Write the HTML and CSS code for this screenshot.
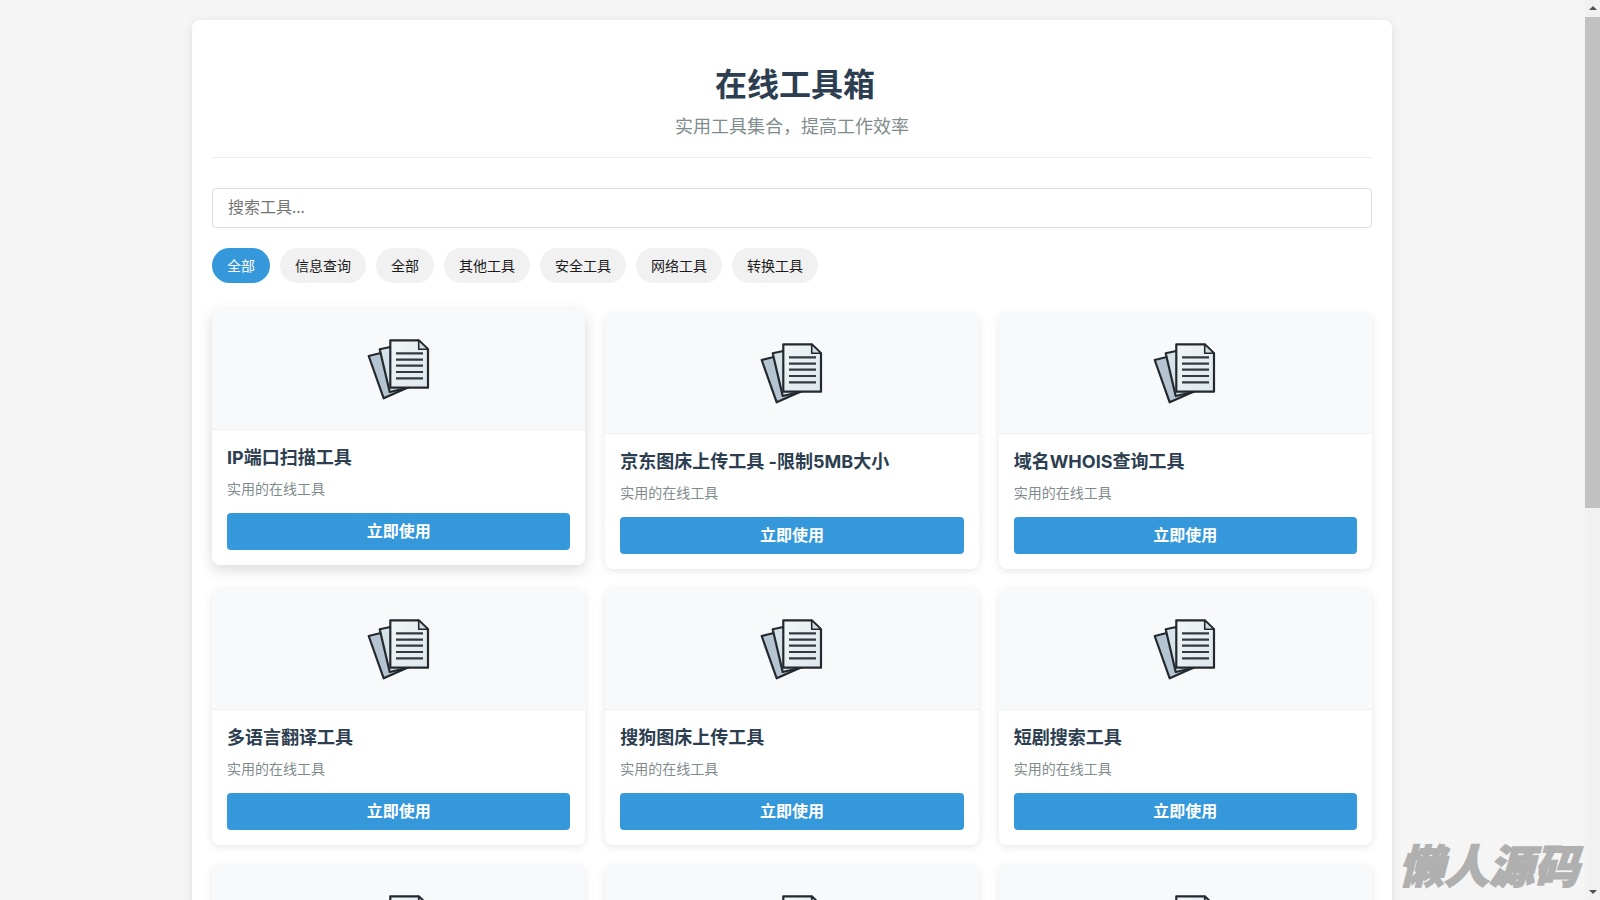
FILE: index.html
```html
<!DOCTYPE html>
<html lang="zh-CN">
<head>
<meta charset="utf-8">
<title>在线工具箱</title>
<link rel="stylesheet" href="styles.css">
</head>
<body>
<svg class="defs" width="0" height="0" aria-hidden="true">
  <defs>
    <linearGradient id="sheet" x1="0" y1="0" x2="1" y2="1">
      <stop offset="0" stop-color="#f2f6f7"/>
      <stop offset="1" stop-color="#dde7eb"/>
    </linearGradient>
  </defs>
  <symbol id="doc" viewBox="0 0 64 64">
    <path d="M1.7 19 12.7 16.3 24 12 42 50 16.7 61.3Z" fill="#b4c4d0" stroke="#23292e" stroke-width="2.2" stroke-linejoin="round"/>
    <path d="M12.7 12.3 23.3 10 41 50.7 22.7 55Z" fill="#d5e2e8" stroke="#23292e" stroke-width="2.2" stroke-linejoin="round"/>
    <path d="M23.3 3.3H51.7L61 12.3V50.7H23.3Z" fill="url(#sheet)" stroke="#23292e" stroke-width="2.2" stroke-linejoin="round"/>
    <path d="M51.7 3.3V12.3H61Z" fill="#cfdde3" stroke="#23292e" stroke-width="1.6" stroke-linejoin="round"/>
    <path d="M29 16.3H56M29 22.7H56M29 28.7H56M29 35H56M29 41.3H56" stroke="#343b40" stroke-width="2.2" fill="none"/>
  </symbol>
</svg>
<div class="viewport">
  <div class="page">
    <main class="container">
      <header class="header">
        <h1 class="title">在线工具箱</h1>
        <p class="subtitle">实用工具集合，提高工作效率</p>
      </header>
      <input class="search" type="text" placeholder="搜索工具...">
      <nav class="filters">
        <span class="pill pill-active">全部</span>
        <span class="pill">信息查询</span>
        <span class="pill">全部</span>
        <span class="pill">其他工具</span>
        <span class="pill">安全工具</span>
        <span class="pill">网络工具</span>
        <span class="pill">转换工具</span>
      </nav>
      <section class="grid">
        <article class="card card-hover">
          <div class="thumb"><svg class="icon"><use href="#doc"/></svg></div>
          <div class="body"><h3 class="name">IP端口扫描工具</h3><p class="desc">实用的在线工具</p><a class="btn">立即使用</a></div>
        </article>
        <article class="card">
          <div class="thumb"><svg class="icon"><use href="#doc"/></svg></div>
          <div class="body"><h3 class="name">京东图床上传工具 -限制5MB大小</h3><p class="desc">实用的在线工具</p><a class="btn">立即使用</a></div>
        </article>
        <article class="card">
          <div class="thumb"><svg class="icon"><use href="#doc"/></svg></div>
          <div class="body"><h3 class="name">域名WHOIS查询工具</h3><p class="desc">实用的在线工具</p><a class="btn">立即使用</a></div>
        </article>
        <article class="card">
          <div class="thumb"><svg class="icon"><use href="#doc"/></svg></div>
          <div class="body"><h3 class="name">多语言翻译工具</h3><p class="desc">实用的在线工具</p><a class="btn">立即使用</a></div>
        </article>
        <article class="card">
          <div class="thumb"><svg class="icon"><use href="#doc"/></svg></div>
          <div class="body"><h3 class="name">搜狗图床上传工具</h3><p class="desc">实用的在线工具</p><a class="btn">立即使用</a></div>
        </article>
        <article class="card">
          <div class="thumb"><svg class="icon"><use href="#doc"/></svg></div>
          <div class="body"><h3 class="name">短剧搜索工具</h3><p class="desc">实用的在线工具</p><a class="btn">立即使用</a></div>
        </article>
        <article class="card">
          <div class="thumb"><svg class="icon"><use href="#doc"/></svg></div>
        </article>
        <article class="card">
          <div class="thumb"><svg class="icon"><use href="#doc"/></svg></div>
        </article>
        <article class="card">
          <div class="thumb"><svg class="icon"><use href="#doc"/></svg></div>
        </article>
      </section>
    </main>
    <div class="watermark">懒人源码</div>
  </div>
  <aside class="scrollbar">
    <span class="arrow arrow-up"></span>
    <span class="track"><span class="thumb-bar"></span></span>
    <span class="arrow arrow-down"></span>
  </aside>
</div>
</body>
</html>
```
FILE: styles.css
```css
* { box-sizing: border-box; }
html, body { margin: 0; height: 100%; overflow: hidden; }
body {
  background: #f5f5f5;
  color: #333;
  font-family: "Noto Sans", "Noto Sans CJK SC", sans-serif;
  line-height: 1.5;
}
.defs { display: block; height: 0; }
.viewport { display: flex; height: 900px; }
.page {
  flex: 1;
  min-width: 0;
  height: 900px;
  overflow: hidden;
  padding: 20px 1px 20px 0;
  position: relative;
}
.container {
  width: 1200px;
  margin: 0 auto;
  padding: 20px;
  background: #fff;
  border-radius: 8px;
  box-shadow: 0 2px 10px rgba(0, 0, 0, .1);
}
.header {
  padding: 20px 0 18px;
  text-align: center;
  border-bottom: 1px solid #eee;
  margin-bottom: 30px;
}
.title {
  margin: 0 0 5px;
  padding-left: 6px;
  font-size: 32px;
  line-height: 48px;
  font-weight: 700;
  color: #2c3e50;
}
.subtitle { margin: 0; font-size: 18px; line-height: 26px; color: #7f8c8d; }
.search {
  display: block;
  width: 100%;
  height: 40px;
  padding: 0 15px 2px;
  border: 1px solid #ddd;
  border-radius: 4px;
  font: 16px "Noto Sans", "Noto Sans CJK SC", sans-serif;
  margin-bottom: 20px;
  outline: none;
}
.search::placeholder { color: #757575; }
.filters { display: flex; gap: 10px; margin-bottom: 30px; }
.pill {
  height: 35px;
  padding: 0 15px;
  border-radius: 20px;
  background: #f1f1f1;
  color: #1a1a1a;
  font-size: 14px;
  line-height: 35px;
}
.pill-active { background: #3498db; color: #fff; }
.grid { display: grid; grid-template-columns: repeat(3, 1fr); gap: 20px; }
.card {
  background: #fff;
  border-radius: 8px;
  overflow: hidden;
  box-shadow: 0 2px 8px rgba(0, 0, 0, .1);
}
.card-hover { transform: translateY(-4px); box-shadow: 0 5px 15px rgba(0, 0, 0, .15); }
.thumb {
  height: 121px;
  display: flex;
  align-items: center;
  justify-content: center;
  background: #f8f9fa;
  border-bottom: 1px solid #f0f0f0;
}
.icon { width: 64px; height: 64px; }
.body { padding: 15px; }
.name {
  margin: 0 0 9px;
  font-family: Inter, "Noto Sans CJK SC", sans-serif;
  font-size: 18px;
  line-height: 25px;
  font-weight: 700;
  color: #2c3e50;
}
.desc { margin: 0 0 15px; font-size: 14px; line-height: 19px; color: #7f8c8d; }
.btn {
  display: block;
  height: 37px;
  border-radius: 4px;
  background: #3498db;
  color: #fff;
  font-size: 16px;
  font-weight: 700;
  line-height: 37px;
  text-align: center;
}
.watermark {
  position: absolute;
  right: 6px;
  bottom: 6px;
  color: #b0b0b0;
  font-family: "Noto Sans CJK SC", sans-serif;
  font-size: 45px;
  font-weight: 900;
  font-style: italic;
  line-height: 60px;
  -webkit-text-stroke: 1.5px #b0b0b0;
}
.scrollbar {
  width: 15px;
  height: 900px;
  flex: none;
  display: flex;
  flex-direction: column;
  background: #f1f1f1;
}
.arrow { width: 15px; height: 17px; flex: none; display: flex; justify-content: center; }
.arrow-up::before {
  content: "";
  margin-top: 6px;
  border: 4px solid transparent;
  border-top: 0;
  border-bottom: 4px solid #505050;
  height: 0;
}
.arrow-down::before {
  content: "";
  margin-top: 7px;
  border: 4px solid transparent;
  border-bottom: 0;
  border-top: 4px solid #505050;
  height: 0;
}
.track { flex: 1; display: block; }
.thumb-bar { display: block; height: 491px; background: #c1c1c1; }
```
